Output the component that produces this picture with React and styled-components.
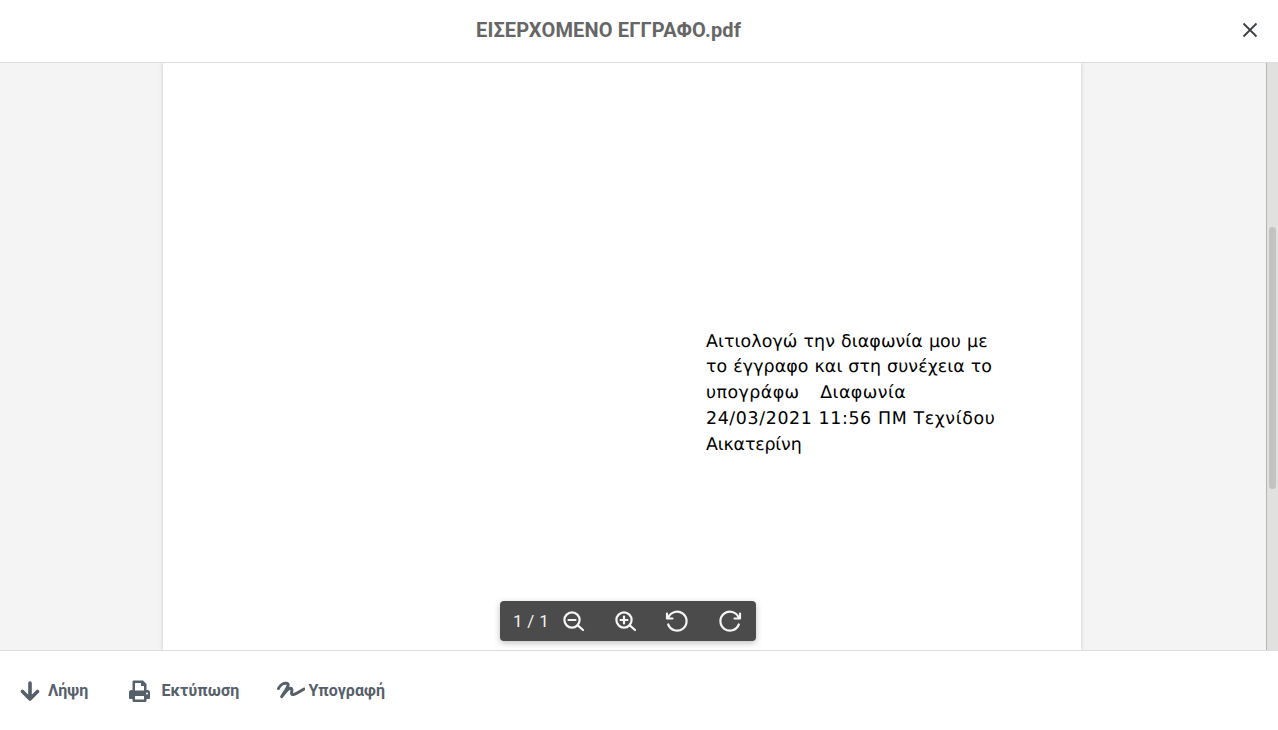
import React from "react";
import styled, { createGlobalStyle } from "styled-components";

const Global = createGlobalStyle`
  html, body { margin: 0; height: 100%; overflow: hidden; background: #fff; }
  #root { height: 100%; }
`;
const Shell = styled.div`
  width: 1278px; height: 730px; display: flex; flex-direction: column; font-family: Roboto, "Liberation Sans", sans-serif; position: relative; overflow: hidden;
`;
const Header = styled.header`
  height: 62px; flex: none; display: flex; align-items: center; border-bottom: 1px solid #dddddd; background: #fff; padding-right: 18px; position: relative; z-index: 2;
`;
const Title = styled.h1`
  flex: 1; margin: 0 0 2px; padding-right: 23px; text-align: center; font-size: 20px; line-height: 24px; font-weight: 700; color: #666666; letter-spacing: .15px;
`;
const CloseButton = styled.button`
  width: 20px; height: 20px; margin-bottom: 2px; padding: 0; border: 0; background: none; display: flex; color: #3c4043;
`;
const Middle = styled.div`
  flex: 1; min-height: 0; display: flex;
`;
const Viewer = styled.main`
  flex: 1; background: #f4f4f4; padding-left: 163px; overflow: hidden;
`;
const Page = styled.div`
  width: 918px; height: 587px; box-sizing: border-box; background: #fff; box-shadow: 0 0 4px rgba(0,0,0,.18); padding: 266.500px 0 0 543px;
`;
const PdfText = styled.div`
  font-family: "DejaVu Sans", sans-serif; font-size: 17.400px; line-height: 25.800px; color: #000; text-rendering: geometricPrecision;
`;
const PdfLine = styled.div`
  white-space: pre; letter-spacing: ${p => p.$spacing}px; word-spacing: ${p => p.$words}px;
`;
const Track = styled.div`
  width: 12px; flex: none; box-sizing: border-box; background: #e1e1df; border-left: 1px solid #b5b5b5; padding: 164px 1px 0 1px;
`;
const Thumb = styled.div`
  height: 262px; margin: 0 1px; background: #c3c3c1; border-radius: 4px;
`;
const Controls = styled.div`
  position: absolute; left: 500px; top: 601px; width: 256px; height: 40px; background: #4b4b4b; border-radius: 4px; box-shadow: 0 2px 6px rgba(0,0,0,.25); display: flex; align-items: center; color: #f2f2f2; z-index: 3;
`;
const PageCount = styled.span`
  font-size: 17px; letter-spacing: .3px; margin-left: 13px; width: 48px; white-space: nowrap;
`;
const ControlIcon = styled.svg`
  width: 24px; height: 24px; flex: none; margin-right: ${p => p.$gap}px; fill: none; stroke: #f5f5f5; stroke-width: 2.200; stroke-linecap: round; stroke-linejoin: round;
`;
const Footer = styled.footer`
  height: 80px; flex: none; box-sizing: border-box; border-top: 1px solid #dddddd; background: #fff; display: flex; align-items: flex-start; padding: 28px 0 0 20px; color: #56606a; position: relative; z-index: 2;
`;
const Action = styled.button`
  border: 0; background: none; padding: 0; margin-right: ${p => p.$gap}px; display: flex; align-items: center; gap: ${p => p.$iconGap}px; height: 24px; color: inherit; font: 700 16px/24px Roboto, "Liberation Sans", sans-serif; letter-spacing: .1px;
`;

const lines = [
  ["Αιτιολογώ την διαφωνία μου με", 0.1, 0.4],
  ["το έγγραφο και στη συνέχεια το", 0.1, 0.3],
  ["υπογράφω   Διαφωνία", 0.45, 0.9],
  ["24/03/2021 11:56 ΠΜ Τεχνίδου", 0.62, 0],
  ["Αικατερίνη", -0.15, 0],
];

export default function App() {
  return (
    <Shell>
      <Global />
      <Header>
        <Title>ΕΙΣΕΡΧΟΜΕΝΟ ΕΓΓΡΑΦΟ.pdf</Title>
        <CloseButton aria-label="close">
          <svg width="20" height="20" viewBox="0 0 20 20" fill="none" stroke="currentColor" strokeWidth="1.800"><path d="M3.500 3.500 16.500 16.500M16.500 3.500 3.500 16.500" /></svg>
        </CloseButton>
      </Header>
      <Middle>
        <Viewer>
          <Page>
            <PdfText>
              {lines.map(([t, s, w]) => <PdfLine key={t} $spacing={s} $words={w}>{t}</PdfLine>)}
            </PdfText>
          </Page>
        </Viewer>
        <Track><Thumb /></Track>
      </Middle>
      <Controls>
        <PageCount>1 / 1</PageCount>
        <ControlIcon $gap={28} viewBox="0 0 24 24"><circle cx="11" cy="11" r="7.600" /><path d="M22 21l-5.500-4.800M7.500 11h7" /></ControlIcon>
        <ControlIcon $gap={27} viewBox="0 0 24 24"><circle cx="11" cy="11" r="7.600" /><path d="M22 21l-5.500-4.800M7.500 11h7M11 7.500v7" /></ControlIcon>
        <ControlIcon $gap={31} viewBox="0 0 24 24"><path d="M4.300 8.500A9.500 9.500 0 1 1 4.200 15.500" /><path d="M3 4.500v5h5.500" /></ControlIcon>
        <ControlIcon $gap={0} viewBox="0 0 24 24"><path d="M19.700 8.500A9.500 9.500 0 1 0 19.800 15.500" /><path d="M21 4.500v5h-5.500" /></ControlIcon>
      </Controls>
      <Footer>
        <Action $gap={41} $iconGap={8}>
          <svg width="20" height="24" viewBox="0 0 20 24" fill="none" stroke="currentColor" strokeWidth="3.600" strokeLinecap="round" strokeLinejoin="round"><path d="M10 4v15.500M2.500 12.500 10 20l7.500-7.500" /></svg>
          Λήψη
        </Action>
        <Action $gap={38} $iconGap={11}>
          <svg width="21" height="24" viewBox="0 0 21 24" fill="currentColor">
            <path fillRule="evenodd" d="M4.500 1.500H14l3.500 3.500v6h1A2.500 2.500 0 0 1 21 13.500V19a1 1 0 0 1-1 1h-2.500v1.500a1.500 1.500 0 0 1-1.500 1.500H5a1.500 1.500 0 0 1-1.500-1.500V20H1a1 1 0 0 1-1-1v-5.500A2.500 2.500 0 0 1 2.500 11h1V2.500a1 1 0 0 1 1-1zM6 4v7.500h9V7h-3V4zM6 17v3.500h9V17z" />
            <circle cx="18" cy="14.500" r="1" fill="#fff" />
          </svg>
          Εκτύπωση
        </Action>
        <Action $gap={0} $iconGap={3}>
          <svg width="28" height="24" viewBox="0 0 28 24" fill="none" stroke="currentColor" strokeWidth="3" strokeLinecap="round" strokeLinejoin="round"><path d="M1.500 9.500C3 6 6.500 4 9.500 4.300 12.500 4.600 11 8 8.500 11.500 6.800 14 5.500 16 4.700 17.700 7.500 14.500 10.500 9.500 13.500 9.300 16 9.200 14.200 13 14.700 15 15 16.500 18.500 15 21 13.500L27 10" /></svg>
          Υπογραφή
        </Action>
      </Footer>
    </Shell>
  );
}
